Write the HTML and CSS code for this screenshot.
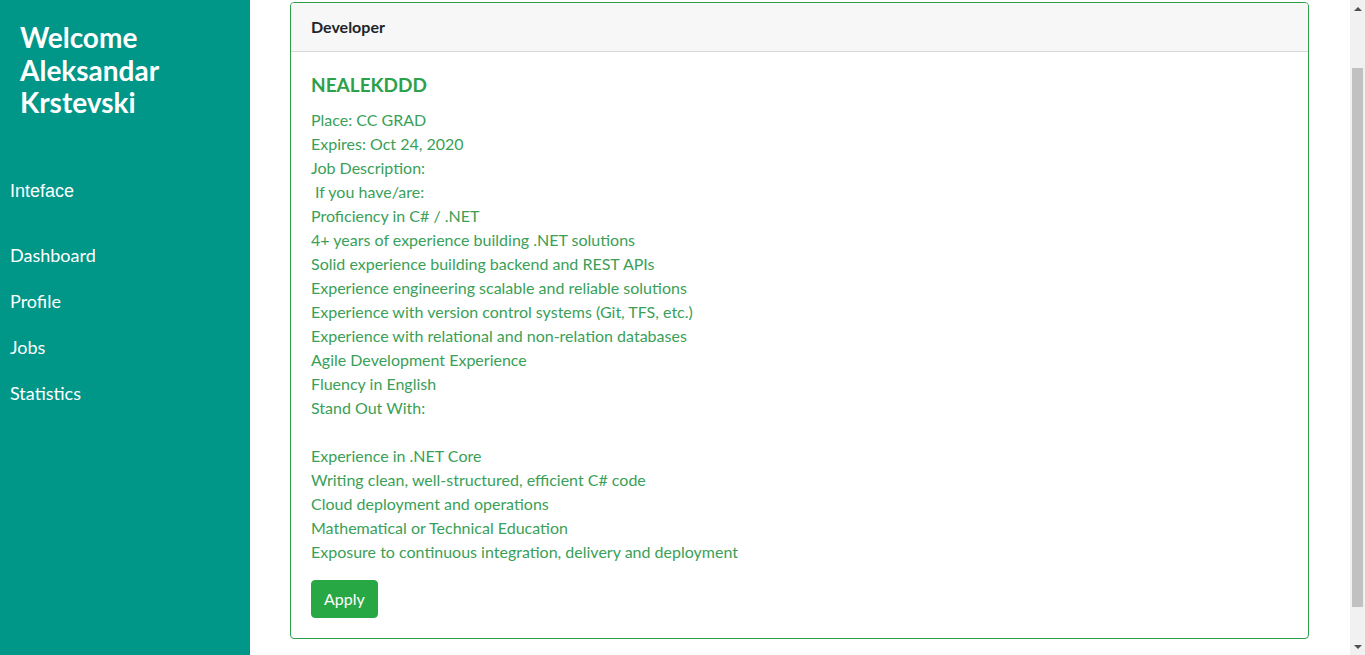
FILE: index.html
```html
<!DOCTYPE html>
<html lang="en">
<head>
<meta charset="utf-8">
<title>Jobs</title>
<link rel="stylesheet" href="styles.css">
</head>
<body>
<div class="layout">
  <aside class="sidebar">
    <h3 class="welcome">Welcome Aleksandar Krstevski</h3>
    <div class="section-label">Inteface</div>
    <nav class="nav">
      <a class="nav-link" href="#">Dashboard</a>
      <a class="nav-link" href="#">Profile</a>
      <a class="nav-link" href="#">Jobs</a>
      <a class="nav-link" href="#">Statistics</a>
    </nav>
  </aside>
  <main class="main">
    <div class="card">
      <div class="card-header">Developer</div>
      <div class="card-body">
        <h5 class="card-title">NEALEKDDD</h5>
        <p class="card-text">Place: CC GRAD<br>Expires: Oct 24, 2020<br>Job Description:<br>&nbsp;If you have/are:<br>Proficiency in C# / .NET<br>4+ years of experience building .NET solutions<br>Solid experience building backend and REST APIs<br>Experience engineering scalable and reliable solutions<br>Experience with version control systems (Git, TFS, etc.)<br>Experience with relational and non-relation databases<br>Agile Development Experience<br>Fluency in English<br>Stand Out With:<br><br>Experience in .NET Core<br>Writing clean, well-structured, efficient C# code<br>Cloud deployment and operations<br>Mathematical or Technical Education<br>Exposure to continuous integration, delivery and deployment</p>
        <button class="btn-apply" type="button">Apply</button>
      </div>
    </div>
  </main>
  <div class="scrollbar" aria-hidden="true">
    <div class="sb-btn"><span class="sb-arrow sb-up"></span></div>
    <div class="sb-track"><div class="sb-thumb"></div></div>
    <div class="sb-btn"><span class="sb-arrow sb-down"></span></div>
  </div>
</div>
</body>
</html>
```
FILE: styles.css
```css
html, body {
  margin: 0;
  padding: 0;
}
body {
  font-family: "Lato", "Liberation Sans", sans-serif;
  font-size: 16px;
  line-height: 24px;
  color: #212529;
  background: #fff;
}
.layout {
  display: flex;
  height: 100vh;
  overflow: hidden;
}
.sidebar {
  width: 250px;
  flex: 0 0 250px;
  background: #009688;
  color: #fff;
}
.welcome {
  margin: 21px 0 0 0;
  padding: 0 20px;
  font-size: 28px;
  line-height: 32.5px;
  font-weight: 700;
}
.section-label {
  margin-top: 61px;
  padding-left: 10px;
  font-family: "Liberation Sans", Arial, sans-serif;
  font-size: 18px;
  line-height: 22px;
}
.nav {
  display: flex;
  flex-direction: column;
  margin-top: 30px;
}
.nav-link {
  display: block;
  padding: 11px 10px;
  font-size: 18px;
  line-height: 24px;
  color: #fff;
  text-decoration: none;
}
.main {
  flex: 1;
  min-width: 0;
  padding: 2px 41px 0 40px;
}
.card {
  border: 1px solid #2f9e48;
  border-radius: 4px;
  background: #fff;
}
.card-header {
  padding: 12px 20px;
  background: #f7f7f7;
  border-bottom: 1px solid rgba(0, 0, 0, 0.125);
  border-radius: 3px 3px 0 0;
  font-weight: 700;
  color: #212529;
}
.card-body {
  padding: 20px;
}
.card-title {
  margin: 1px 0 11px 0;
  font-size: 19px;
  line-height: 24px;
  font-weight: 700;
  color: #2ca14a;
}
.card-text {
  margin: 0 0 16px 0;
  color: #3a9f57;
}
.btn-apply {
  display: inline-block;
  font-family: inherit;
  font-size: 16px;
  line-height: 24px;
  padding: 6px 12px;
  color: #fff;
  background: #28a745;
  border: 1px solid #28a745;
  border-radius: 4px;
  cursor: pointer;
}
.scrollbar {
  flex: 0 0 15px;
  width: 15px;
  display: flex;
  flex-direction: column;
  background: #f1f1f1;
}
.sb-btn {
  flex: 0 0 17px;
  display: flex;
  align-items: center;
  justify-content: center;
}
.sb-arrow {
  width: 0;
  height: 0;
  border-left: 4px solid transparent;
  border-right: 4px solid transparent;
}
.sb-up {
  border-bottom: 4px solid #505050;
}
.sb-down {
  border-top: 4px solid #505050;
}
.sb-track {
  flex: 1;
  padding: 0 2px;
}
.sb-thumb {
  margin-top: 51px;
  height: 539px;
  background: #c1c1c1;
}
```
